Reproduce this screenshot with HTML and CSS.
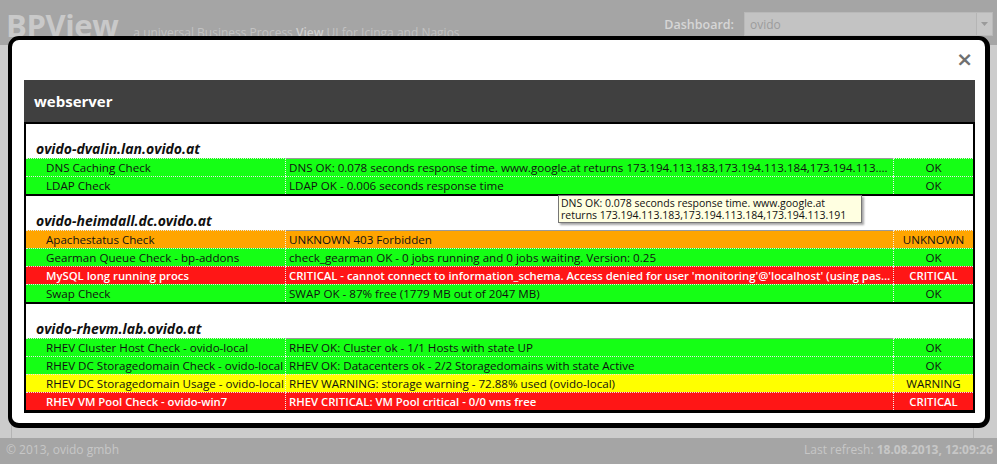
FILE: index.html
```html
<!DOCTYPE html>
<html>
<head>
<meta charset="utf-8">
<link rel="stylesheet" href="styles.css">
</head>
<body>
<div class="page">
  <header class="topbar">
    <div class="brand">
      <span class="logo">BPView</span>
      <span class="tagline">a universal Business Process <b>View</b> UI for Icinga and Nagios</span>
    </div>
    <div class="dash">
      <span class="dash-label">Dashboard:</span>
      <div class="select"><span>ovido</span><span class="select-btn"><svg width="7" height="4" viewBox="0 0 7 4"><path d="M0 0h7L3.5 4z" fill="#9a9a9a"/></svg></span></div>
    </div>
  </header>
  <main class="main"><div class="content"></div></main>
  <footer class="footer">
    <span>© 2013, ovido gmbh</span>
    <span>Last refresh: <b>18.08.2013, 12:09:26</b></span>
  </footer>
</div>

<div class="dialog">
  <div class="close">×</div>
  <div class="panel">
    <div class="panel-head">webserver</div>
    <div class="panel-body">
      <section class="host">
        <div class="host-title">ovido-dvalin.lan.ovido.at</div>
        <div class="row ok first"><div class="c-name">DNS Caching Check</div><div class="c-out">DNS OK: 0.078 seconds response time. www.google.at returns 173.194.113.183,173.194.113.184,173.194.113.191</div><div class="c-st">OK</div></div>
        <div class="row ok"><div class="c-name">LDAP Check</div><div class="c-out">LDAP OK - 0.006 seconds response time</div><div class="c-st">OK</div></div>
      </section>
      <section class="host">
        <div class="host-title">ovido-heimdall.dc.ovido.at</div>
        <div class="row unknown first"><div class="c-name">Apachestatus Check</div><div class="c-out">UNKNOWN 403 Forbidden</div><div class="c-st">UNKNOWN</div></div>
        <div class="row ok"><div class="c-name">Gearman Queue Check - bp-addons</div><div class="c-out">check_gearman OK - 0 jobs running and 0 jobs waiting. Version: 0.25</div><div class="c-st">OK</div></div>
        <div class="row critical"><div class="c-name">MySQL long running procs</div><div class="c-out">CRITICAL - cannot connect to information_schema. Access denied for user 'monitoring'@'localhost' (using password: YES)</div><div class="c-st">CRITICAL</div></div>
        <div class="row ok"><div class="c-name">Swap Check</div><div class="c-out">SWAP OK - 87% free (1779 MB out of 2047 MB)</div><div class="c-st">OK</div></div>
      </section>
      <section class="host">
        <div class="host-title">ovido-rhevm.lab.ovido.at</div>
        <div class="row ok first"><div class="c-name">RHEV Cluster Host Check - ovido-local</div><div class="c-out">RHEV OK: Cluster ok - 1/1 Hosts with state UP</div><div class="c-st">OK</div></div>
        <div class="row ok"><div class="c-name">RHEV DC Storagedomain Check - ovido-local</div><div class="c-out">RHEV OK: Datacenters ok - 2/2 Storagedomains with state Active</div><div class="c-st">OK</div></div>
        <div class="row warning"><div class="c-name">RHEV DC Storagedomain Usage - ovido-local</div><div class="c-out">RHEV WARNING: storage warning - 72.88% used (ovido-local)</div><div class="c-st">WARNING</div></div>
        <div class="row critical"><div class="c-name">RHEV VM Pool Check - ovido-win7</div><div class="c-out">RHEV CRITICAL: VM Pool critical - 0/0 vms free</div><div class="c-st">CRITICAL</div></div>
      </section>
    </div>
  </div>
</div>

<div class="tooltip">DNS OK: 0.078 seconds response time. www.google.at<br>returns 173.194.113.183,173.194.113.184,173.194.113.191</div>
</body>
</html>
```

FILE: styles.css
```css
* { box-sizing: border-box; }
html, body { margin: 0; padding: 0; }
body {
  width: 997px;
  height: 464px;
  overflow: hidden;
  font-family: "Open Sans", "Noto Sans", sans-serif;
  background: #cccccc;
  position: relative;
}
.page {
  display: flex;
  flex-direction: column;
  height: 464px;
}
.topbar {
  height: 45px;
  background: #a5a5a5;
  display: flex;
  justify-content: space-between;
  align-items: flex-start;
  padding: 0 4px 0 6px;
}
.brand {
  display: flex;
  align-items: baseline;
  padding-top: 5px;
}
.logo {
  font-size: 31px;
  font-weight: 700;
  color: #c9c9c9;
  letter-spacing: -0.4px;
  line-height: 40px;
}
.tagline {
  margin-left: 15px;
  font-size: 12px;
  color: #c2c2c2;
}
.tagline b { color: #cfcfcf; font-weight: 600; }
.dash {
  display: flex;
  align-items: center;
  padding-top: 12px;
}
.dash-label {
  font-size: 12.5px;
  font-weight: 600;
  color: #d6d6d6;
  margin-right: 10px;
}
.select {
  width: 249px;
  height: 24px;
  background: #c3c3c3;
  border: 1px solid #b9b9b9;
  display: flex;
  justify-content: space-between;
  align-items: center;
  padding-left: 5px;
  font-size: 12px;
  color: #9c9c9c;
}
.select-btn {
  width: 16px;
  height: 22px;
  border-left: 1px solid #b5b5b5;
  display: flex;
  align-items: center;
  justify-content: center;
  background: #c6c6c6;
}
.main {
  flex: 1;
  padding: 0 23px 0 11px;
  display: flex;
}
.content {
  flex: 1;
  border-left: 1px solid #b4b4b4;
  border-right: 1px solid #b4b4b4;
}
.footer {
  height: 26px;
  background: #a5a5a5;
  display: flex;
  justify-content: space-between;
  align-items: center;
  padding: 0 4px 3px 6px;
  font-size: 12px;
  color: #c7c7c7;
}
.footer b { font-weight: 700; }

/* modal */
.dialog {
  position: absolute;
  left: 8px;
  top: 36px;
  width: 982px;
  height: 392px;
  background: #fff;
  border: 4px solid #000;
  border-right-width: 5px;
  border-bottom-width: 5px;
  border-radius: 11px;
  padding: 40px 11px 0 12px;
}
.close {
  position: absolute;
  right: 12px;
  top: 9px;
  font-family: "DejaVu Sans", sans-serif;
  font-size: 20px;
  line-height: 20px;
  font-weight: 700;
  color: #707070;
}
.panel { width: 951px; }
.panel-head {
  height: 42px;
  background: #404040;
  color: #fff;
  font-weight: 700;
  font-size: 15px;
  line-height: 42px;
  padding-left: 10px;
}
.panel-body {
  border: 2px solid #000;
  border-bottom-width: 3px;
}
.host + .host { border-top: 2px solid #000; }
.host-title {
  font-size: 14px;
  font-weight: 700;
  font-style: italic;
  line-height: 18px;
  padding: 16px 0 0 10px;
  color: #111;
}
.row {
  display: grid;
  grid-template-columns: 260px 607px 80px;
  height: 18px;
  font-size: 11.6px;
  line-height: 17px;
  color: #111;
}
.row > div {
  border-top: 1px dotted #e6e6e6;
  white-space: nowrap;
  overflow: hidden;
  text-overflow: ellipsis;
}
.row.first > .c-out { border-top: 1px solid #9a9a9a; }
.c-name {
  padding-left: 20px;
  border-right: 1px dotted #f0f0f0;
}
.c-out { padding-left: 3px; padding-right: 2px; }
.c-st {
  text-align: center;
  border-left: 1px dotted #f0f0f0;
}
.ok { background: #15ff15; }
.unknown { background: #ffa500; }
.warning { background: #ffff00; }
.critical { background: #ff1616; color: #fff; font-weight: 600; font-size: 11.3px; }

.tooltip {
  position: absolute;
  left: 558px;
  top: 195px;
  width: 304px;
  height: 28px;
  background: #ffffe1;
  border: 1px solid #767676;
  box-shadow: 2px 2px 2px rgba(0,0,0,0.35);
  font-size: 10.5px;
  line-height: 12px;
  padding: 1px 2px;
  color: #111;
  white-space: nowrap;
}
```
